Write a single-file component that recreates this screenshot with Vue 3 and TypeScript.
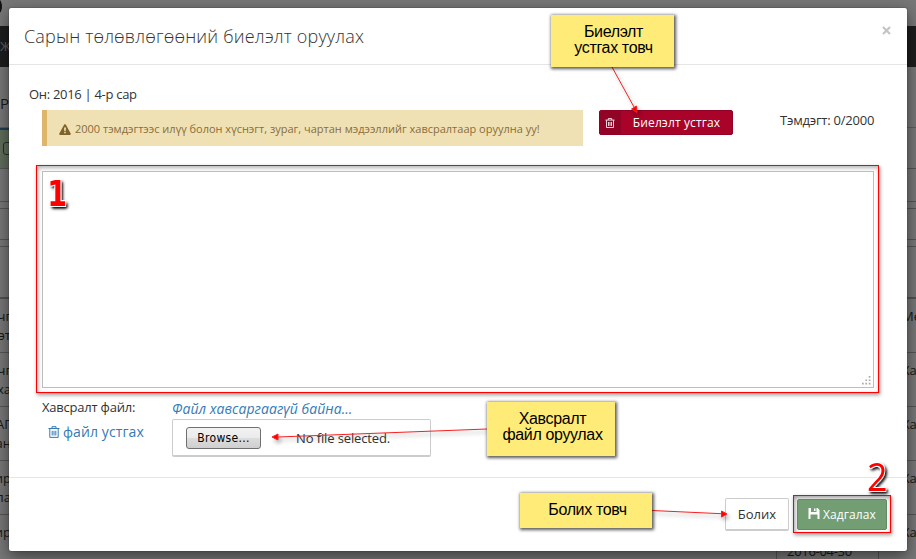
<script setup lang="ts">
interface BackRow { left: string[]; right: string }

const rows: BackRow[] = [
  { left: ['нчг', 'дэт'], right: 'Ме' },
  { left: ['нчг', 'ха'], right: 'Ха' },
  { left: ['АГ', 'ан'], right: 'Ха' },
  { left: ['ир', 'ла'], right: 'Ха' },
  { left: ['ир'], right: 'Ха' },
]
</script>

<template>
  <div class="screen">
    <div class="page">
      <div class="topbar"><span class="dot"></span></div>
      <div class="nav">Ж</div>
      <div class="heading">РГ</div>
      <div class="tabs"><span class="tab"><i></i></span></div>
      <div class="strip first"></div>
      <div class="strip gap"></div>
      <div class="strip second"></div>
      <div class="strip gap"></div>
      <div class="strip thead"></div>
      <div v-for="(row, i) in rows" :key="i" class="row">
        <div class="cell-left"><div v-for="line in row.left" :key="line"><span>{{ line }}</span></div></div>
        <div v-if="i === rows.length - 1" class="date">2016-04-30</div>
        <div class="cell-right">{{ row.right }}</div>
      </div>
    </div>
    <div class="shade"></div>

    <section class="modal">
      <header>
        <h4>Сарын төлөвлөгөөний биелэлт оруулах</h4>
        <svg class="close" viewBox="0 0 9 9"><path d="M1 1 8 8M8 1 1 8" /></svg>
      </header>
      <main>
        <p class="period">Он: 2016 | 4-р сар</p>
        <div class="info">
          <div class="alert">
            <svg class="warn" viewBox="0 0 12 11"><path fill-rule="evenodd" d="M5.2.6Q6 0 6.8.6L11.8 9.7Q12 10.8 11 11H1Q0 10.8.2 9.7ZM5 3.4 5.3 7H6.7L7 3.4ZM5.2 7.8V9.3H6.8V7.8Z" /></svg>
            <span>2000 тэмдэгтээс илүү болон хүснэгт, зураг, чартан мэдээллийг хавсралтаар оруулна уу!</span>
          </div>
          <button class="danger">
            <span class="badge"><svg class="trash" viewBox="0 0 12 12"><path d="M.5 2.5H11.5M4 2.2V.7H8V2.2M1.8 2.7V11.4H10.2V2.7M4.2 4.8V9.5M6 4.8V9.5M7.8 4.8V9.5" /></svg></span>
            <span class="label">Биелэлт устгах</span>
          </button>
          <span class="counter">Тэмдэгт: 0/2000</span>
        </div>
        <div class="frame">
          <div class="editor">
            <svg viewBox="0 0 8 8"><path d="M6 0h1.5v1.5H6zM3 3h1.5v1.5H3zM6 3h1.5v1.5H6zM0 6h1.5v1.5H0zM3 6h1.5v1.5H3zM6 6h1.5v1.5H6z" /></svg>
          </div>
        </div>
        <div class="attach">
          <div class="attach-name">
            <div class="attach-label">Хавсралт файл:</div>
            <a><svg class="trash" viewBox="0 0 12 12"><path d="M.5 2.5H11.5M4 2.2V.7H8V2.2M1.8 2.7V11.4H10.2V2.7M4.2 4.8V9.5M6 4.8V9.5M7.8 4.8V9.5" /></svg><span>файл устгах</span></a>
          </div>
          <div class="attach-file">
            <em>Файл хавсаргаагүй байна...</em>
            <div class="file"><button class="browse">Browse...</button><span>No file selected.</span></div>
          </div>
        </div>
      </main>
      <footer>
        <button class="cancel">Болих</button>
        <div class="save-frame">
          <button class="save"><svg viewBox="0 0 11 11"><path fill-rule="evenodd" d="M0 0H2.5V4H8V0H9L11 2V11H9V6.5H2V11H0ZM5.5.4H7V3H5.5Z" /></svg><span>Хадгалах</span></button>
        </div>
      </footer>
    </section>

    <svg class="arrows" viewBox="0 0 916 559">
      <g>
        <path d="M612 67 634 107M487 429 278 437M652 510.500 721 513.700" />
        <path class="head" d="M637 112.500 631.500 109 636.500 106ZM272 437 278 434V440ZM727 514 721.500 511V517Z" />
      </g>
    </svg>
    <div class="note note-delete"><span>Биелэлт</span><span>устгах товч</span></div>
    <div class="note note-file"><span>Хавсралт</span><span>файл оруулах</span></div>
    <div class="note note-cancel"><span>Болих товч</span></div>
    <b class="step one">1</b>
    <b class="step two">2</b>
  </div>
</template>

<style>
body { margin: 0; overflow: hidden; }
</style>

<style scoped>
* { box-sizing: border-box; }
.screen { position: relative; width: 916px; height: 559px; overflow: hidden; font: 13px/18px "Open Sans", "Noto Sans", sans-serif; color: #333; }
button { font: inherit; padding: 0; margin: 0; }
p, h4 { margin: 0; }
.page { position: absolute; inset: 0; background: #eee; overflow: hidden; }
.shade { position: absolute; inset: 0; background: rgba(0, 0, 0, .5); }
.topbar { height: 26px; }
.dot { display: block; width: 6px; height: 13px; margin-left: -4px; border-radius: 50%; background: #222; }
.nav { height: 41px; background: #3a3a3a; color: #bbb; padding-top: 11px; }
.heading { height: 60px; padding-top: 27px; font-size: 15px; }
.tabs { height: 42px; border-top: 1px solid #bbb; border-bottom: 1px solid #aaa; }
.tab { display: block; width: 20px; height: 40px; background: #c3d8b9; border-top: 2px solid #3a7ea5; padding: 12px 0 0 3px; }
.tab i { display: block; width: 13px; height: 13px; border: 1px solid #386b42; border-radius: 3px; }
.strip { border-bottom: 1px solid #aaa; }
.first { height: 33px; }
.gap { height: 7px; }
.second { height: 31px; }
.thead { height: 52px; border-bottom: 2px solid #a5a5a5; }
.row { height: 54px; border-bottom: 1px solid #aaa; display: flex; justify-content: space-between; padding-top: 8px; }
.cell-left { width: 11px; display: flex; flex-direction: column; align-items: flex-end; line-height: 19px; }
.cell-left div { display: flex; justify-content: flex-end; }
.cell-right { width: 14px; line-height: 19px; }
.date { margin: 18px 23px 0 auto; width: 103px; height: 35px; padding: 1px 0 0 10px; border: solid #aaa; border-width: 0 1px; letter-spacing: -.3px; }
.modal { position: absolute; left: 9px; top: 8px; width: 898px; height: 543px; display: flex; flex-direction: column; background: #fff; border-radius: 2px; box-shadow: 0 5px 15px rgba(0, 0, 0, .5), 0 0 1px #000; }
header { height: 57px; border-bottom: 1px solid #e5e5e5; display: flex; justify-content: space-between; padding: 15px 16px 0 15px; }
h4 { font-weight: 300; font-size: 18px; line-height: 26px; letter-spacing: .18px; white-space: nowrap; }
.close { width: 9px; height: 9px; margin-top: 3px; stroke: #c4c4c4; stroke-width: 2.2; }
main { height: 412px; padding: 20px 27px 0 20px; }
.period { height: 25px; line-height: 18px; letter-spacing: -.3px; }
.info { height: 55px; margin-left: 13px; display: flex; align-items: flex-start; }
.alert { width: 541px; height: 36px; background: #efe1b3; border-left: 5px solid #dfb56c; color: #8a6d3b; display: flex; align-items: center; gap: 4px; padding: 2px 0 0 12px; font-size: 11px; white-space: nowrap; }
.warn { width: 12px; height: 11px; fill: #806329; }
.danger { margin: 0 0 0 16px; width: 134px; height: 25px; border: 1px solid #920025; border-radius: 2px; background: #a90329; color: #fff; display: flex; overflow: hidden; }
.badge { width: 21px; height: 23px; background: #920425; display: flex; align-items: center; justify-content: center; }
.trash { width: 12px; height: 12px; fill: none; stroke: currentColor; stroke-width: 1; }
.badge .trash { width: 10px; height: 12px; margin-right: 2px; }
.label { flex: 1; line-height: 24px; font-size: 12px; letter-spacing: .12px; text-align: center; white-space: nowrap; }
.counter { margin: 1px 0 0 47px; letter-spacing: -.22px; white-space: nowrap; }
.frame { width: 843px; height: 228px; margin-left: 7px; border: 1px solid #f00; box-shadow: 1px 2px 4px rgba(0, 0, 0, .4), inset 1px 2px 4px rgba(0, 0, 0, .3); padding: 5px; }
.editor { height: 217px; width: 832px; border: 1px solid #bdbdbd; background: #fff; display: flex; align-items: flex-end; justify-content: flex-end; padding: 2px; }
.editor svg { width: 9px; height: 9px; fill: #aaa; }
.attach { display: flex; margin: 5px 0 0 13px; }
.attach-name { width: 130px; }
.attach-label { height: 22px; line-height: 18px; letter-spacing: -.22px; white-space: nowrap; }
a { display: flex; align-items: center; gap: 3px; padding-left: 6px; color: #337ab7; font-size: 14px; line-height: 24px; letter-spacing: .1px; white-space: nowrap; }
em { display: block; font-size: 14px; line-height: 21px; height: 21px; letter-spacing: .04px; color: #337ab7; white-space: nowrap; }
.file { width: 259px; height: 38px; border: 1px solid #ccc; border-bottom-width: 2px; border-radius: 2px; display: flex; align-items: center; padding-left: 13px; gap: 35px; letter-spacing: -.12px; }
.browse { width: 75px; height: 22px; border: 1px solid #707070; border-radius: 3px; background: linear-gradient(#f2f2f2, #ebebeb 49%, #ddd 50%, #cfcfcf); color: #000; font: 12px/20px "DejaVu Sans Condensed", "DejaVu Sans", sans-serif; font-stretch: condensed; letter-spacing: .3px; }
footer { flex: 1; border-top: 1px solid #e5e5e5; display: flex; justify-content: flex-end; align-items: flex-start; padding: 17px 16px 0 0; gap: 4px; }
.cancel { width: 64px; height: 33px; margin-top: 3px; border: 1px solid #ccc; border-bottom-width: 2px; border-radius: 2px; background: #fff; color: #333; }
.save-frame { width: 98px; height: 38px; border: 1px solid #f00; padding: 3px; box-shadow: 1px 2px 4px rgba(0, 0, 0, .4), inset 1px 2px 4px rgba(0, 0, 0, .4); }
.save { width: 90px; height: 31px; border: 1px solid #618b65; border-radius: 2px; background: #739e73; color: #fff; font-size: 12px; letter-spacing: .1px; display: flex; align-items: center; justify-content: center; gap: 3px; }
.save svg { width: 12px; height: 11px; fill: #fff; margin-top: -2px; }
.arrows { position: absolute; inset: 0; width: 916px; height: 559px; }
.arrows g { filter: drop-shadow(2px 3px 2px rgba(0, 0, 0, .35)); }
.arrows path { fill: none; stroke: #f82020; stroke-width: 1; }
.arrows .head { fill: #f00; }
.note { position: absolute; display: flex; flex-direction: column; align-items: center; background: #ffec78; color: #000; box-shadow: 1px 1px 3px 1px rgba(0, 0, 0, .65); font: 16px/16px "Liberation Sans", sans-serif; letter-spacing: -.35px; white-space: nowrap; }
.note-delete { left: 551px; top: 15px; width: 123px; height: 52px; padding: 9px 0 0 2px; }
.note-file { left: 487px; top: 402px; width: 128px; height: 54px; padding: 9px 0 0 3px; }
.note-cancel { left: 520px; top: 493px; width: 132px; height: 35px; padding: 9px 0 0 3px; }
.step { position: absolute; color: #f00; text-shadow: -1px -1px #fff, 1px -1px #fff, -1px 1px #fff, 1px 1px #fff, 2px 2px 3px #000, 2px 2px 4px #000; }
.one { left: 46px; top: 174px; font: bold 36px/40px "DejaVu Sans Condensed", "DejaVu Sans", sans-serif; font-stretch: condensed; transform: scaleX(.88); }
.two { left: 866px; top: 456px; font: 500 39px/40px "Open Sans", sans-serif; transform: scaleX(.92); }
</style>
